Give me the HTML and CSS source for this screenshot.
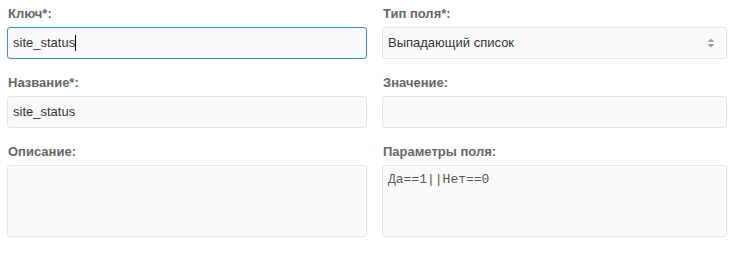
FILE: index.html
```html
<!DOCTYPE html>
<html lang="ru">
<head>
<meta charset="utf-8">
<link rel="stylesheet" href="styles.css">
</head>
<body>
<div class="form">
  <div class="col col-left">
    <div class="group">
      <label class="lbl">Ключ*:</label>
      <div class="field focus">site_status<span class="caret"></span></div>
    </div>
    <div class="group">
      <label class="lbl">Название*:</label>
      <div class="field">site_status</div>
    </div>
    <div class="group">
      <label class="lbl">Описание:</label>
      <div class="field area"></div>
    </div>
  </div>
  <div class="col col-right">
    <div class="group">
      <label class="lbl">Тип поля*:</label>
      <div class="field select">
        <span>Выпадающий список</span>
        <svg class="arrows" width="8" height="10" viewBox="0 0 8 10"><path d="M4 0.5 L7.5 4 L0.5 4 Z M4 9.5 L7.5 6 L0.5 6 Z" fill="#a0a0a0"/></svg>
      </div>
    </div>
    <div class="group">
      <label class="lbl">Значение:</label>
      <div class="field"></div>
    </div>
    <div class="group">
      <label class="lbl">Параметры поля:</label>
      <div class="field area mono">Да==1||Нет==0</div>
    </div>
  </div>
</div>
</body>
</html>
```
FILE: styles.css
```css
html, body {
  margin: 0;
  padding: 0;
  background: #fff;
}
body {
  font-family: "Liberation Sans", Arial, sans-serif;
  font-size: 13px;
  color: #333;
}
.form {
  display: flex;
  gap: 15px;
  padding: 0 0 0 7px;
}
.col-left { width: 360px; }
.col-right { width: 345px; }
.group {
  display: flex;
  flex-direction: column;
}
.lbl {
  display: block;
  font-weight: bold;
  color: #666;
  height: 15px;
  line-height: 15px;
  margin: 6px 0 6px 1px;
}
.group + .group .lbl {
  margin-top: 16px;
}
.field {
  box-sizing: border-box;
  height: 32px;
  border: 1px solid #e3e3e3;
  border-radius: 3px;
  background: #fafafa;
  padding: 0 5px;
  line-height: 30px;
  color: #333;
  position: relative;
}
.field.focus {
  border-color: #3c8dbc;
}
.caret {
  display: inline-block;
  width: 1px;
  height: 16px;
  background: #000;
  vertical-align: -4px;
}
.select {
  display: flex;
  align-items: center;
  justify-content: space-between;
  padding-right: 11px;
}
.arrows {
  display: block;
}
.area {
  height: 72px;
}
.mono {
  font-family: "Liberation Mono", "Courier New", monospace;
  font-size: 13px;
  line-height: 15px;
  padding-top: 6px;
  color: #555;
}
```
